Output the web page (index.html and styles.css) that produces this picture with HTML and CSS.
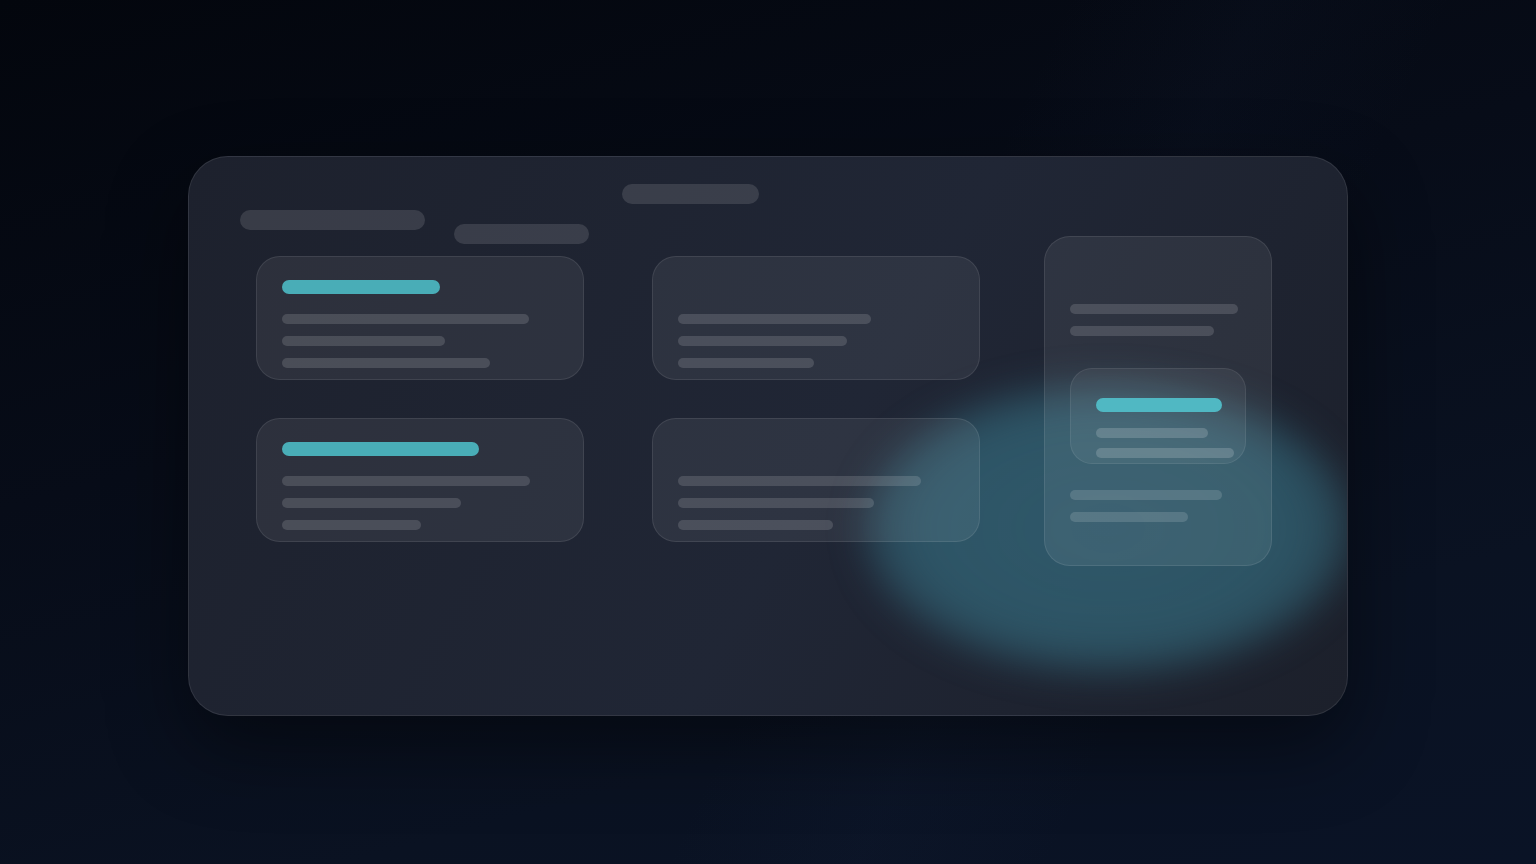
FILE: index.html
```html
<!DOCTYPE html>
<html lang="en">
<head>
<meta charset="utf-8">
<title>Skeleton dashboard</title>
<link rel="stylesheet" href="styles.css">
</head>
<body>
<main class="stage">
  <section class="panel">
    <div class="glow"></div>
    <header class="panel-header">
      <span class="bar bar-head bar-h1"></span>
      <span class="bar bar-head bar-h2"></span>
      <span class="bar bar-head bar-h3"></span>
    </header>
    <div class="panel-body">
      <div class="card-grid">
        <article class="card">
          <span class="bar bar-accent" style="width:158px"></span>
          <div class="lines">
            <span class="bar bar-line" style="width:247px"></span>
            <span class="bar bar-line" style="width:163px"></span>
            <span class="bar bar-line" style="width:208px"></span>
          </div>
        </article>
        <article class="card card-plain">
          <div class="lines">
            <span class="bar bar-line" style="width:193px"></span>
            <span class="bar bar-line" style="width:169px"></span>
            <span class="bar bar-line" style="width:136px"></span>
          </div>
        </article>
        <article class="card">
          <span class="bar bar-accent" style="width:197px"></span>
          <div class="lines">
            <span class="bar bar-line" style="width:248px"></span>
            <span class="bar bar-line" style="width:179px"></span>
            <span class="bar bar-line" style="width:139px"></span>
          </div>
        </article>
        <article class="card card-plain">
          <div class="lines">
            <span class="bar bar-line" style="width:243px"></span>
            <span class="bar bar-line" style="width:196px"></span>
            <span class="bar bar-line" style="width:155px"></span>
          </div>
        </article>
      </div>
      <aside class="side-card">
        <div class="lines">
          <span class="bar bar-line" style="width:168px"></span>
          <span class="bar bar-line" style="width:144px"></span>
        </div>
        <div class="inner-card">
          <span class="bar bar-accent bar-accent-bright" style="width:126px"></span>
          <div class="inner-lines">
            <span class="bar bar-line" style="width:112px"></span>
            <span class="bar bar-line" style="width:138px"></span>
          </div>
        </div>
        <div class="lines lines-bottom">
          <span class="bar bar-line" style="width:152px"></span>
          <span class="bar bar-line" style="width:118px"></span>
        </div>
      </aside>
    </div>
  </section>
</main>
</body>
</html>
```

FILE: styles.css
```css
* { box-sizing: border-box; }

html, body {
  margin: 0;
  height: 100%;
}

body {
  background:
    linear-gradient(115deg, rgba(255,255,255,0) 55%, rgba(40,60,100,0.06) 65%, rgba(255,255,255,0) 75%),
    linear-gradient(165deg, #03060d 0%, #070c18 40%, #0a1222 75%, #0a1326 100%);
  font-family: "Inter", "Liberation Sans", sans-serif;
  overflow: hidden;
}

.stage {
  width: 1536px;
  height: 864px;
  padding-top: 156px;
  padding-left: 188px;
}

.panel {
  position: relative;
  width: 1160px;
  height: 560px;
  border-radius: 40px;
  border: 1px solid rgba(255,255,255,0.09);
  background: linear-gradient(120deg, #1d212d 0%, #202635 55%, #1c202b 100%);
  box-shadow: 0 30px 80px rgba(0,0,0,0.45);
  overflow: hidden;
  padding-top: 27px;
}

.glow {
  position: absolute;
  left: 676px;
  top: 226px;
  width: 486px;
  height: 290px;
  border-radius: 50%;
  background: radial-gradient(ellipse at center, rgba(58,120,140,0.62) 0%, rgba(58,125,145,0.55) 55%, rgba(58,125,145,0.0) 100%);
  filter: blur(18px);
  z-index: 0;
}

.panel-header {
  position: relative;
  z-index: 1;
  display: flex;
  align-items: flex-start;
  height: 52px;
  padding-left: 51px;
}

.bar {
  display: block;
  border-radius: 999px;
}

.bar-head {
  height: 20px;
  background: rgba(255,255,255,0.12);
}

.bar-h1 { width: 185px; margin-top: 26px; }
.bar-h2 { width: 135px; margin-top: 40px; margin-left: 29px; }
.bar-h3 { width: 137px; margin-top: 0; margin-left: 33px; }

.panel-body {
  position: relative;
  z-index: 1;
  display: flex;
  align-items: flex-start;
  padding-left: 67px;
}

.card-grid {
  display: grid;
  grid-template-columns: 328px 328px;
  grid-auto-rows: 124px;
  column-gap: 68px;
  row-gap: 38px;
  margin-top: 20px;
}

.card {
  border-radius: 24px;
  border: 1px solid rgba(255,255,255,0.09);
  background: rgba(255,255,255,0.065);
  padding: 23px 25px 0;
}

.card-plain {
  padding-top: 57px;
}

.bar-accent {
  height: 14px;
  background: #49adb7;
}

.bar-accent-bright {
  background: #50b8c3;
}

.card .lines {
  margin-top: 20px;
}

.card-plain .lines {
  margin-top: 0;
}

.lines {
  display: flex;
  flex-direction: column;
  gap: 12px;
}

.bar-line {
  height: 10px;
  background: rgba(255,255,255,0.14);
}

.side-card {
  width: 228px;
  height: 330px;
  margin-left: 64px;
  border-radius: 26px;
  border: 1px solid rgba(255,255,255,0.09);
  background: rgba(255,255,255,0.07);
  padding: 67px 0 0 25px;
}

.inner-card {
  width: 176px;
  height: 96px;
  margin-top: 32px;
  border-radius: 22px;
  border: 1px solid rgba(255,255,255,0.08);
  background: rgba(255,255,255,0.06);
  padding: 29px 0 0 25px;
}

.inner-lines {
  display: flex;
  flex-direction: column;
  gap: 10px;
  margin-top: 16px;
}

.inner-lines .bar-line {
  background: rgba(255,255,255,0.17);
}

.lines-bottom {
  margin-top: 26px;
}
```
